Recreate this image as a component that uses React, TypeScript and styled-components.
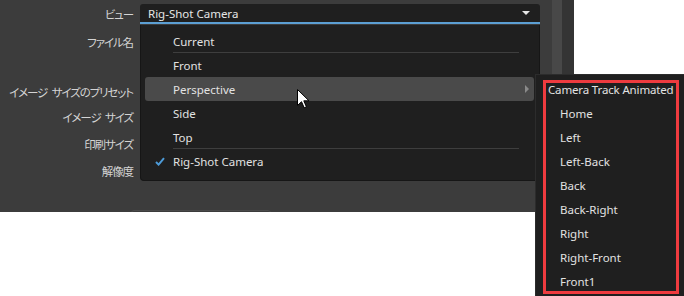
import styled, { createGlobalStyle } from 'styled-components';

const GlobalStyle = createGlobalStyle`
  body {
    margin: 0;
    background: #ffffff;
  }
`;

const menuItems = [
  { label: 'Current', separatorAfter: true },
  { label: 'Front' },
  { label: 'Perspective', active: true, submenu: true },
  { label: 'Side' },
  { label: 'Top', separatorAfter: true },
  { label: 'Rig-Shot Camera', checked: true },
];

const subItems = [
  'Home',
  'Left',
  'Left-Back',
  'Back',
  'Back-Right',
  'Right',
  'Right-Front',
  'Front1',
];

const formRows = [
  { label: 'ビュー', gap: 1, combo: true },
  { label: 'ファイル名', gap: 2 },
  { label: 'イメージ サイズのプリセット', gap: 24 },
  { label: 'イメージ サイズ', gap: -1 },
  { label: '印刷サイズ', gap: 1 },
  { label: '解像度', gap: 1 },
];

function CheckIcon() {
  return (
    <svg width="10" height="9" viewBox="0 0 10 9">
      <path d="M1 5 L3.6 7.6 L9 1.2" fill="none" stroke="#4d9bd8" strokeWidth="2" />
    </svg>
  );
}

function CursorIcon() {
  return (
    <svg width="13" height="20" viewBox="0 0 13 20">
      <path
        d="M0.5 0.5 L0.5 16.5 L4.5 12.7 L7.2 18.8 L9.4 17.8 L6.8 11.8 L12 11.8 Z"
        fill="#ffffff"
        stroke="#000000"
        strokeWidth="1"
      />
    </svg>
  );
}

function App() {
  return (
    <Page>
      <GlobalStyle />
      <Dialog>
        <Form>
          {formRows.map((row) => (
            <Row key={row.label} $gap={row.gap}>
              <Label>{row.label}</Label>
              {row.combo ? (
                <Combo>
                  <span>Rig-Shot Camera</span>
                  <DownArrow />
                </Combo>
              ) : null}
            </Row>
          ))}
          <PeekButton />
        </Form>
        <ScrollStrip $tone="#484848" $width={10} />
        <ScrollStrip $tone="#343434" $width={12} />
      </Dialog>

      <Menu>
        {menuItems.map((it) => (
          <div key={it.label}>
            <MenuItem $active={it.active}>
              <CheckSlot>{it.checked ? <CheckIcon /> : null}</CheckSlot>
              <span>{it.label}</span>
              {it.submenu ? <RightArrow /> : null}
            </MenuItem>
            {it.separatorAfter ? <Separator /> : null}
          </div>
        ))}
      </Menu>

      <SubMenu>
        <SubHeader>Camera Track Animated</SubHeader>
        {subItems.map((it) => (
          <SubItem key={it}>{it}</SubItem>
        ))}
        <Highlight />
      </SubMenu>

      <Cursor>
        <CursorIcon />
      </Cursor>
    </Page>
  );
}

export default App;

const Page = styled.div`
  position: relative;
  width: 684px;
  height: 296px;
  overflow: hidden;
  background: #ffffff;
`;

const Dialog = styled.div`
  display: flex;
  width: 574px;
  height: 212px;
`;

const Form = styled.div`
  position: relative;
  flex: 1;
  background: #3c3c3c;
  overflow: hidden;
  display: flex;
  flex-direction: column;
`;

const Row = styled.div<{ $gap: number }>`
  display: flex;
  align-items: center;
  gap: 7px;
  height: 26px;
  margin-top: ${(p) => p.$gap}px;
  flex-shrink: 0;
`;

const Label = styled.div`
  width: 133px;
  flex-shrink: 0;
  text-align: right;
  color: #d4d4d4;
  font-family: 'Noto Sans CJK JP', sans-serif;
  font-feature-settings: 'palt';
  font-size: 11.5px;
  letter-spacing: -1.1px;
  word-spacing: 3px;
  white-space: pre;
`;

const Combo = styled.div`
  display: flex;
  align-items: center;
  justify-content: space-between;
  box-sizing: border-box;
  width: 400px;
  height: 20px;
  padding: 0 10px 0 8px;
  background: #1f1f1f;
  border-radius: 3px 3px 0 0;
  border-bottom: 2px solid #5c9fd3;
  color: #e6e6e6;
  font-family: 'Noto Sans', sans-serif;
  font-size: 11.5px;
`;

const DownArrow = styled.div`
  width: 0;
  height: 0;
  border-left: 4px solid transparent;
  border-right: 4px solid transparent;
  border-top: 4px solid #e6e6e6;
`;

const PeekButton = styled.div`
  position: absolute;
  left: 131px;
  top: 210px;
  width: 138px;
  height: 20px;
  border: 1px solid #4a4a4a;
  border-radius: 3px;
`;

const ScrollStrip = styled.div<{ $tone: string; $width: number }>`
  width: ${(p) => p.$width}px;
  background: ${(p) => p.$tone};
`;

const Menu = styled.div`
  position: absolute;
  left: 140px;
  top: 25px;
  box-sizing: border-box;
  width: 400px;
  height: 156px;
  padding-top: 4px;
  background: #1f1f1f;
  border: 1px solid #161616;
  border-top: none;
  border-radius: 0 0 4px 4px;
  font-family: 'Noto Sans', sans-serif;
  font-size: 11.5px;
  color: #e2e2e2;
`;

const MenuItem = styled.div<{ $active?: boolean }>`
  position: relative;
  display: flex;
  align-items: center;
  height: 24px;
  margin: 0 5px 0 4px;
  border-radius: 3px;
  background: ${(p) => (p.$active ? '#4a4a4a' : 'transparent')};
`;

const CheckSlot = styled.div`
  width: 26px;
  display: flex;
  justify-content: center;
  padding-left: 2px;
`;

const RightArrow = styled.div`
  position: absolute;
  right: 5px;
  top: 8px;
  width: 0;
  height: 0;
  border-top: 4px solid transparent;
  border-bottom: 4px solid transparent;
  border-left: 4px solid #8a8a8a;
`;

const Separator = styled.div`
  height: 1px;
  margin: -1px 20px 0 32px;
  background: #3e3e3e;
`;

const SubMenu = styled.div`
  position: absolute;
  left: 535px;
  top: 74px;
  box-sizing: border-box;
  width: 160px;
  height: 230px;
  padding-top: 2px;
  background: #1f1f1f;
  border: 1px solid #2c2c2c;
  font-family: 'Noto Sans', sans-serif;
  font-size: 11.5px;
  color: #e2e2e2;
`;

const SubHeader = styled.div`
  display: flex;
  align-items: center;
  height: 24px;
  padding-left: 12px;
  letter-spacing: -0.15px;
  white-space: nowrap;
`;

const SubItem = styled.div`
  display: flex;
  align-items: center;
  height: 24px;
  padding-left: 24px;
`;

const Highlight = styled.div`
  position: absolute;
  left: 7px;
  top: 5px;
  box-sizing: border-box;
  width: 136px;
  height: 214px;
  border: 3px solid #ee3b3f;
`;

const Cursor = styled.div`
  position: absolute;
  left: 297px;
  top: 89px;
  line-height: 0;
`;
